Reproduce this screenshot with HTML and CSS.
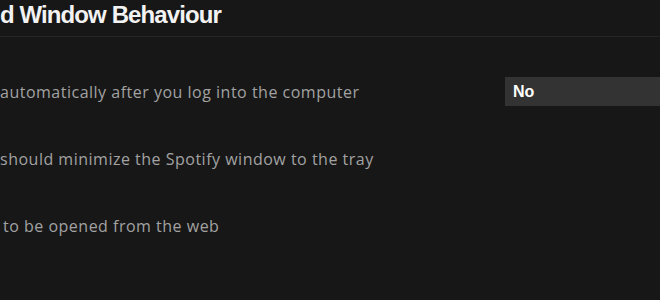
FILE: index.html
```html
<!DOCTYPE html>
<html>
<head>
<meta charset="utf-8">
<link rel="stylesheet" href="styles.css">
</head>
<body>
<div class="page">
  <div class="header">
    <h2 class="title">d Window Behaviour</h2>
  </div>
  <div class="rows">
    <div class="row">
      <span class="label">automatically after you log into the computer</span>
      <div class="select"><span class="select-value">No</span></div>
    </div>
    <div class="row">
      <span class="label">should minimize the Spotify window to the tray</span>
    </div>
    <div class="row">
      <span class="label label-indent">to be opened from the web</span>
    </div>
  </div>
</div>
</body>
</html>
```
FILE: styles.css
```css
html, body {
  margin: 0;
  padding: 0;
  background: #171717;
  overflow: hidden;
}
.page {
  width: 660px;
  height: 300px;
  font-family: "Open Sans", "Liberation Sans", Arial, sans-serif;
}
.header {
  height: 36px;
  border-bottom: 1px solid #262626;
  display: flex;
  align-items: flex-start;
}
.title {
  margin: 0;
  font-family: "Liberation Sans", Arial, sans-serif;
  font-size: 24px;
  line-height: 30px;
  font-weight: bold;
  letter-spacing: -0.9px;
  color: #f2f2f2;
}
.rows {
  padding-top: 21px;
  display: flex;
  flex-direction: column;
}
.row {
  height: 67px;
  display: flex;
  align-items: center;
  justify-content: space-between;
}
.label {
  font-size: 16px;
  letter-spacing: 0.5px;
  color: #a2a2a2;
  white-space: nowrap;
}
.label-indent {
  padding-left: 3px;
}
.select {
  width: 165px;
  height: 29px;
  margin-right: -10px;
  background: #333333;
  display: flex;
  align-items: center;
  padding-left: 8px;
  box-sizing: border-box;
}
.select-value {
  font-family: "Liberation Sans", Arial, sans-serif;
  font-size: 16px;
  font-weight: bold;
  color: #ffffff;
}
```
